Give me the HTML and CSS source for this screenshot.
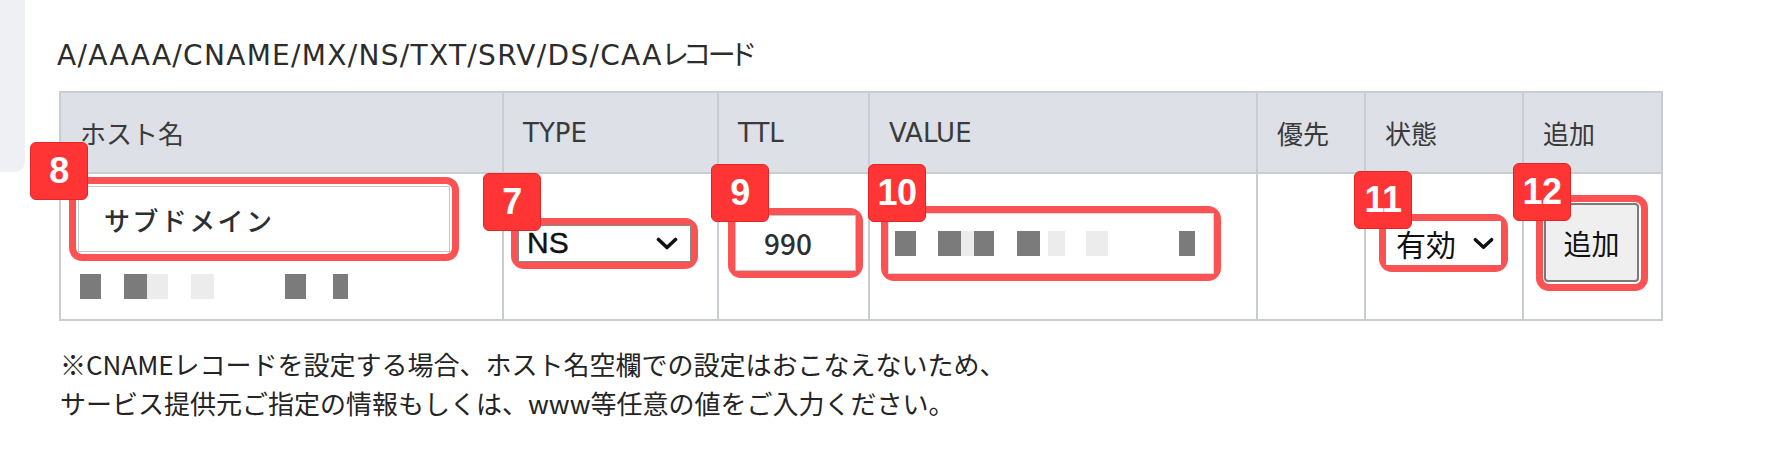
FILE: index.html
```html
<!DOCTYPE html>
<html lang="ja">
<head>
<meta charset="utf-8">
<title>DNSレコード</title>
<link rel="stylesheet" href="styles.css">
</head>
<body>
<div class="page">
  <aside class="side"></aside>
  <main class="main">
    <h2 class="title">A/AAAA/CNAME/MX/NS/TXT/SRV/DS/CAA<span class="kana">レコード</span></h2>
    <table class="rec">
      <colgroup>
        <col class="c-host"><col class="c-type"><col class="c-ttl"><col class="c-val"><col class="c-pri"><col class="c-state"><col class="c-add">
      </colgroup>
      <thead>
        <tr><th>ホスト名</th><th>TYPE</th><th>TTL</th><th>VALUE</th><th>優先</th><th>状態</th><th>追加</th></tr>
      </thead>
      <tbody>
        <tr>
          <td class="td-host">
            <div class="hl hl-host">
              <span class="badge b8">8</span>
              <input class="inp inp-host" type="text" value="サブドメイン">
            </div>
            <div class="redact r-host">
              <span class="sp w3"></span><span class="dk w21"></span><span class="sp w23"></span><span class="dk w23"></span><span class="lt w21"></span><span class="sp w23"></span><span class="lt w23"></span><span class="sp w71"></span><span class="dk w21"></span><span class="sp w27"></span><span class="dk w15"></span>
            </div>
          </td>
          <td class="td-type">
            <div class="hl hl-type">
              <span class="badge b7">7</span>
              <div class="sel sel-type"><span class="sel-text">NS</span><svg class="chev" viewBox="0 0 22 13" width="22" height="13"><path d="M2.5 2.5 L11 10.5 L19.5 2.5" fill="none" stroke="#111" stroke-width="3.6" stroke-linecap="round" stroke-linejoin="round"/></svg></div>
            </div>
          </td>
          <td class="td-ttl">
            <div class="hl hl-ttl">
              <span class="badge b9">9</span>
              <input class="inp inp-ttl" type="text" value="990">
            </div>
          </td>
          <td class="td-val">
            <div class="hl hl-val">
              <span class="badge b10">10</span>
              <div class="inp inp-val">
                <div class="redact r-val">
                  <span class="dk w21"></span><span class="sp w22"></span><span class="dk w23"></span><span class="lt w13"></span><span class="dk w20"></span><span class="sp w23"></span><span class="dk w23"></span><span class="sp w8"></span><span class="lt w17"></span><span class="sp w21"></span><span class="lt w22"></span><span class="sp w71"></span><span class="dk w16"></span>
                </div>
              </div>
            </div>
          </td>
          <td class="td-pri"></td>
          <td class="td-state">
            <div class="hl hl-state">
              <span class="badge b11">11</span>
              <div class="sel sel-state"><span class="sel-text">有効</span><svg class="chev" viewBox="0 0 22 13" width="21" height="13"><path d="M2.5 2.5 L11 10.5 L19.5 2.5" fill="none" stroke="#111" stroke-width="3.6" stroke-linecap="round" stroke-linejoin="round"/></svg></div>
            </div>
          </td>
          <td class="td-add">
            <div class="hl hl-add">
              <span class="badge b12">12</span>
              <button class="btn" type="button">追加</button>
            </div>
          </td>
        </tr>
      </tbody>
    </table>
    <p class="notes">※CNAMEレコードを設定する場合、ホスト名空欄での設定はおこなえないため、<br>サービス提供元ご指定の情報もしくは、www等任意の値をご入力ください。</p>
  </main>
</div>
</body>
</html>
```

FILE: styles.css
```css
* { box-sizing: border-box; }
html, body { margin: 0; padding: 0; background: #ffffff; }
body {
  font-family: "Noto Sans CJK JP", "Noto Sans", sans-serif;
  color: #333333;
}
.page {
  display: flex;
  align-items: flex-start;
  width: 1766px;
  height: 462px;
  overflow: hidden;
}
.side {
  flex: none;
  width: 25px;
  height: 172px;
  background: #eef0f4;
  border-bottom-right-radius: 10px;
}
.main {
  padding: 33px 0 0 34px;
}
.title {
  margin: 0 0 15px -2px;
  font-family: "DejaVu Sans", "Noto Sans CJK JP", sans-serif;
  font-size: 28px;
  line-height: 40px;
  font-weight: 400;
  letter-spacing: 1.3px;
  color: #2c2c2c;
}
.title .kana {
  font-family: "Noto Sans CJK JP", sans-serif;
  font-feature-settings: "palt";
  letter-spacing: -3px;
}

/* table */
.rec {
  border-collapse: collapse;
  table-layout: fixed;
  width: 1602px;
}
.c-host { width: 443px; }
.c-type { width: 215px; }
.c-ttl { width: 151px; }
.c-val { width: 388px; }
.c-pri { width: 108px; }
.c-state { width: 158px; }
.c-add { width: 139px; }
.rec th, .rec td {
  border: 2px solid #c9cdd2;
  text-align: left;
  vertical-align: middle;
}
.rec th {
  height: 81px;
  padding: 0 0 0 19px;
  background: #dde1e7;
  font-family: "DejaVu Sans", "Noto Sans CJK JP", sans-serif;
  font-size: 26px;
  font-weight: 400;
  color: #3a3a3a;
}
.rec td {
  height: 147px;
  padding: 0 0 7px 0;
  background: #ffffff;
}
.rec .td-host { padding: 0 0 16px 8px; }
.rec .td-type { padding-left: 7px; }
.rec .td-ttl { padding-left: 9px; }
.rec .td-val { padding-left: 11px; }
.rec .td-state { padding-left: 13px; }
.rec .td-add { padding-left: 12px; }

/* highlight rings */
.hl {
  position: relative;
  display: flex;
  border: 7px solid #fb5353;
  border-radius: 13px;
  background: #ffffff;
}
.hl-host { width: 390px; height: 84px; padding: 2px; }
.hl-type { width: 187px; height: 51px; }
.hl-ttl { width: 135px; height: 70px; }
.hl-val { width: 340px; height: 75px; }
.hl-state { width: 129px; height: 58px; }
.hl-add { width: 112px; height: 96px; padding: 1px 2px 2px 1px; }

/* badges */
.badge {
  position: absolute;
  z-index: 2;
  width: 58px;
  height: 58px;
  display: flex;
  align-items: center;
  justify-content: center;
  background: #ff3535;
  border: 1px solid #e02626;
  border-radius: 6px;
  color: #ffffff;
  font-family: "Liberation Sans", Arial, sans-serif;
  font-weight: 700;
  font-size: 36px;
  line-height: 1;
  letter-spacing: -0.5px;
}
.b8 { left: -46px; top: -42px; }
.b7 { left: -35px; top: -52px; }
.b9 { left: -24px; top: -51px; }
.b10 { left: -20px; top: -49px; }
.b11 { left: -32px; top: -50px; }
.b12 { left: -30px; top: -39px; }

/* inputs */
.inp {
  display: block;
  width: 100%;
  height: 100%;
  margin: 0;
  border: 1px solid #c6c6c6;
  background: #ffffff;
  color: #2b2f33;
  font-family: "Noto Sans CJK JP", "Noto Sans", sans-serif;
  outline: none;
}
.inp-host {
  padding: 0 0 0 25px;
  font-size: 26px;
  font-weight: 500;
  letter-spacing: 2.4px;
}
.inp-ttl {
  padding: 0 0 0 28px;
  font-size: 28px;
  font-weight: 500;
}
.inp-val {
  display: flex;
  align-items: center;
  padding: 0 0 0 6px;
  border-color: #d8d8d8;
}

/* selects */
.sel {
  display: flex;
  align-items: center;
  justify-content: space-between;
  width: 100%;
  height: 100%;
  background: #ffffff;
  color: #111111;
}
.sel-type {
  border: 1px solid #8a8a8a;
  padding: 0 12px 0 8px;
}
.sel-type .sel-text {
  font-family: "Liberation Sans", Arial, sans-serif;
  font-size: 30px;
  -webkit-text-stroke: 0.4px #111111;
}
.sel-state {
  padding: 0 7px 0 10px;
}
.sel-state .sel-text {
  font-size: 30px;
}
.chev { display: block; flex: none; }

/* button */
.btn {
  width: 100%;
  height: 100%;
  margin: 0;
  padding: 0;
  background: #efefef;
  border: 2px solid #7a7a7a;
  border-radius: 4px;
  color: #111111;
  font-family: "Noto Sans CJK JP", sans-serif;
  font-size: 28px;
}

/* redacted text */
.redact {
  display: flex;
  align-items: center;
  height: 27px;
}
.r-host { margin: 12px 0 0 8px; }
.redact span { display: block; height: 25px; flex: none; }
.dk { background: #7b7b7b; }
.lt { background: #ececec; }
.sp { background: transparent; }
.w3 { width: 3px; }
.w8 { width: 8px; }
.w13 { width: 13px; }
.w15 { width: 15px; }
.w16 { width: 16px; }
.w17 { width: 17px; }
.w20 { width: 20px; }
.w21 { width: 21px; }
.w22 { width: 22px; }
.w23 { width: 23px; }
.w27 { width: 27px; }
.w71 { width: 71px; }

/* notes */
.notes {
  margin: 23px 0 0 1px;
  font-size: 26px;
  line-height: 39px;
  color: #242424;
}
```
